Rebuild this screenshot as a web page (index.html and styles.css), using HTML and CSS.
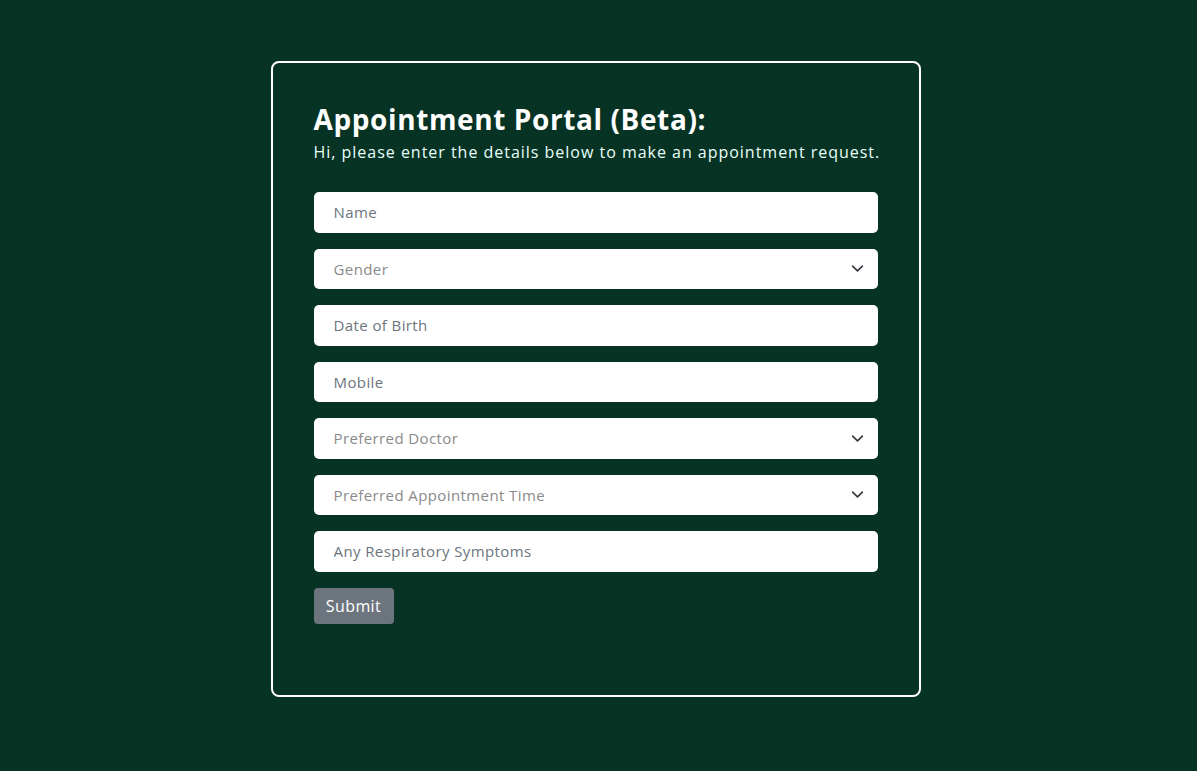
FILE: index.html
```html
<!DOCTYPE html>
<html lang="en">
<head>
<meta charset="utf-8">
<title>Appointment Portal</title>
<link rel="stylesheet" href="styles.css">
</head>
<body>
<main class="page">
  <section class="card">
    <h1 class="title">Appointment Portal (Beta):</h1>
    <p class="subtitle">Hi, please enter the details below to make an appointment request.</p>
    <form class="form">
      <input class="field" type="text" placeholder="Name">
      <div class="select">
        <span class="select-text">Gender</span>
        <svg class="chev" width="13" height="13" viewBox="0 0 16 16"><path d="M2 5l6 6 6-6" fill="none" stroke="#343a40" stroke-width="2" stroke-linecap="round" stroke-linejoin="round"/></svg>
      </div>
      <input class="field" type="text" placeholder="Date of Birth">
      <input class="field" type="text" placeholder="Mobile">
      <div class="select">
        <span class="select-text">Preferred Doctor</span>
        <svg class="chev" width="13" height="13" viewBox="0 0 16 16"><path d="M2 5l6 6 6-6" fill="none" stroke="#343a40" stroke-width="2" stroke-linecap="round" stroke-linejoin="round"/></svg>
      </div>
      <div class="select">
        <span class="select-text">Preferred Appointment Time</span>
        <svg class="chev" width="13" height="13" viewBox="0 0 16 16"><path d="M2 5l6 6 6-6" fill="none" stroke="#343a40" stroke-width="2" stroke-linecap="round" stroke-linejoin="round"/></svg>
      </div>
      <input class="field" type="text" placeholder="Any Respiratory Symptoms">
      <div class="actions">
        <button class="submit" type="button">Submit</button>
      </div>
    </form>
  </section>
</main>
</body>
</html>
```

FILE: styles.css
```css
html, body {
  margin: 0;
  padding: 0;
  background: #063324;
  height: 100%;
}
body {
  font-family: "Open Sans", "Liberation Sans", sans-serif;
}
.page {
  display: flex;
  justify-content: center;
  padding: 61px 6px 0 0;
}
.card {
  box-sizing: border-box;
  width: 650px;
  height: 636px;
  border: 2px solid #ffffff;
  border-radius: 8px;
  padding: 38px 41px 40px 41px;
}
.title {
  margin: 0;
  color: #ffffff;
  font-size: 28px;
  font-weight: 700;
  line-height: 36px;
  letter-spacing: 0.6px;
}
.subtitle {
  margin: 3px 0 0;
  color: #eafffa;
  font-size: 16px;
  line-height: 24px;
  font-weight: 400;
  letter-spacing: 0.98px;
  white-space: nowrap;
}
.form {
  display: flex;
  flex-direction: column;
  gap: 16px;
  margin-top: 28px;
}
.field, .select {
  box-sizing: border-box;
  width: 100%;
  height: 40.5px;
  border: none;
  border-radius: 5px;
  background: #ffffff;
  padding: 0 20px;
  font-family: inherit;
  font-size: 15px;
  letter-spacing: 0.4px;
  color: #212529;
  outline: none;
}
.field::placeholder {
  color: #6c757d;
  opacity: 1;
}
.select {
  display: flex;
  align-items: center;
  justify-content: space-between;
  padding-right: 14px;
}
.select-text {
  color: #8a8a8a;
}
.chev {
  display: block;
}
.actions {
  display: flex;
}
.submit {
  height: 36px;
  width: 80px;
  border: none;
  border-radius: 4px;
  background: #6c757d;
  color: #ffffff;
  font-family: inherit;
  font-size: 16px;
  letter-spacing: 0.4px;
  padding: 0;
}
```
